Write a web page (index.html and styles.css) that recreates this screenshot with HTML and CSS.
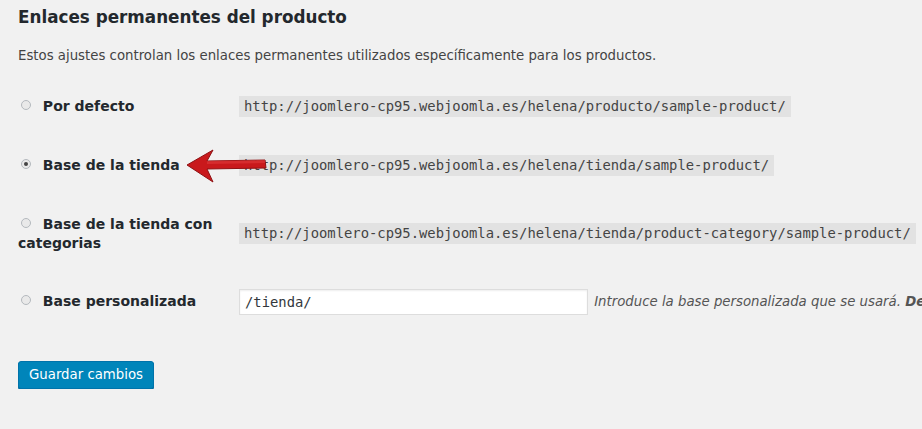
FILE: index.html
```html
<!DOCTYPE html>
<html>
<head>
	<meta charset="utf-8">
	<title>Enlaces permanentes del producto</title>
	<link rel="stylesheet" href="styles.css">
</head>
<body>
	<div class="wrap">
		<h2>Enlaces permanentes del producto</h2>
		<p class="intro">Estos ajustes controlan los enlaces permanentes utilizados específicamente para los productos.</p>

		<form onsubmit="return false">
			<table class="form-table">
				<colgroup>
					<col class="col-label">
					<col>
				</colgroup>
				<tr>
					<th><label><input type="radio" name="product_permalink" value=""> Por defecto</label></th>
					<td><code>http://joomlero-cp95.webjoomla.es/helena/producto/sample-product/</code></td>
				</tr>
				<tr>
					<th><label><input type="radio" name="product_permalink" value="/tienda" checked> Base de la tienda</label></th>
					<td><code>http://joomlero-cp95.webjoomla.es/helena/tienda/sample-product/</code></td>
				</tr>
				<tr>
					<th><label><input type="radio" name="product_permalink" value="/tienda/%product_cat%"> Base de la tienda con categorias</label></th>
					<td><code>http://joomlero-cp95.webjoomla.es/helena/tienda/product-category/sample-product/</code></td>
				</tr>
				<tr>
					<th><label><input type="radio" name="product_permalink" value="custom"> Base personalizada</label></th>
					<td>
						<input type="text" class="regular-text code" name="product_permalink_structure" value="/tienda/">
						<span class="description">Introduce la base personalizada que se usará. <b>De</b></span>
					</td>
				</tr>
			</table>

			<p class="submit"><input type="submit" class="button-primary" value="Guardar cambios"></p>
		</form>

		<!-- annotation arrow pointing at the selected option -->
		<svg class="arrow" width="92" height="42" viewBox="0 0 92 42">
			<polygon points="7,20 33,5 27,16 85,15 86,23 27,24 33,37" fill="#c9191c" stroke="#8e1214" stroke-width="1" stroke-linejoin="round"/>
			<polygon points="27,16 85,15 85,18 27,19" fill="#e0393b" opacity="0.6"/>
		</svg>
	</div>
</body>
</html>
```

FILE: styles.css
```css
html, body {
	margin: 0;
	background: #f1f1f1;
	overflow: hidden;
}

body {
	font-family: "DejaVu Sans", sans-serif;
	font-size: 13px;
	color: #444;
}

.wrap {
	position: relative;
	padding: 6px 0 0 18px;
}

h2 {
	font-size: 16.8px;
	line-height: 22px;
	font-weight: bold;
	color: #23282d;
	margin: 0;
}

.intro {
	font-size: 13.3px;
	margin: 18px 0 0;
	line-height: 20px;
	color: #444;
}

.form-table {
	border-collapse: collapse;
	table-layout: fixed;
	width: 1100px;
	margin-top: 11px;
}

.col-label {
	width: 221px;
}

.form-table th {
	padding: 20px 11px 20px 0;
	text-align: left;
	vertical-align: middle;
	font-size: 14px;
	line-height: 19px;
	font-weight: bold;
	color: #23282d;
}

.form-table tr:nth-child(3) th {
	padding-bottom: 19px;
}

.form-table td {
	padding: 0;
	vertical-align: middle;
	white-space: nowrap;
	overflow: hidden;
}

input[type=radio] {
	appearance: none;
	-webkit-appearance: none;
	width: 10px;
	height: 10px;
	margin: 0 7px 0 3px;
	border: 1px solid #b4b9be;
	border-radius: 50%;
	background: #e9e9e9;
	box-sizing: border-box;
	vertical-align: 1px;
	position: relative;
}

input[type=radio]:checked::before {
	content: "";
	position: absolute;
	left: 2px;
	top: 2px;
	width: 4px;
	height: 4px;
	border-radius: 50%;
	background: #444;
}

code, .code {
	font-family: "DejaVu Sans Mono", monospace;
	font-size: 13.85px;
}

code {
	display: inline-block;
	background: #e2e2e2;
	color: #444;
	padding: 1px 5px;
	line-height: 19px;
}

.regular-text {
	width: 349px;
	height: 26px;
	box-sizing: border-box;
	padding: 2px 5px;
	border: 1px solid #ddd;
	box-shadow: inset 0 1px 2px rgba(0, 0, 0, 0.07);
	background: #fff;
	color: #32373c;
	vertical-align: middle;
	margin: 0;
}

.description {
	font-size: 13.3px;
	font-style: italic;
	color: #555;
	margin-left: 2px;
	vertical-align: middle;
}

.submit {
	margin: 30px 0 0;
}

.button-primary {
	font-family: "DejaVu Sans", sans-serif;
	font-size: 13.3px;
	height: 28px;
	padding: 0 10px 2px;
	width: 136px;
	background: #0085ba;
	border: 1px solid #0073aa;
	border-radius: 3px;
	box-shadow: 0 1px 0 #006799;
	color: #fff;
	cursor: pointer;
}

.arrow {
	position: absolute;
	left: 180px;
	top: 145px;
}
```
